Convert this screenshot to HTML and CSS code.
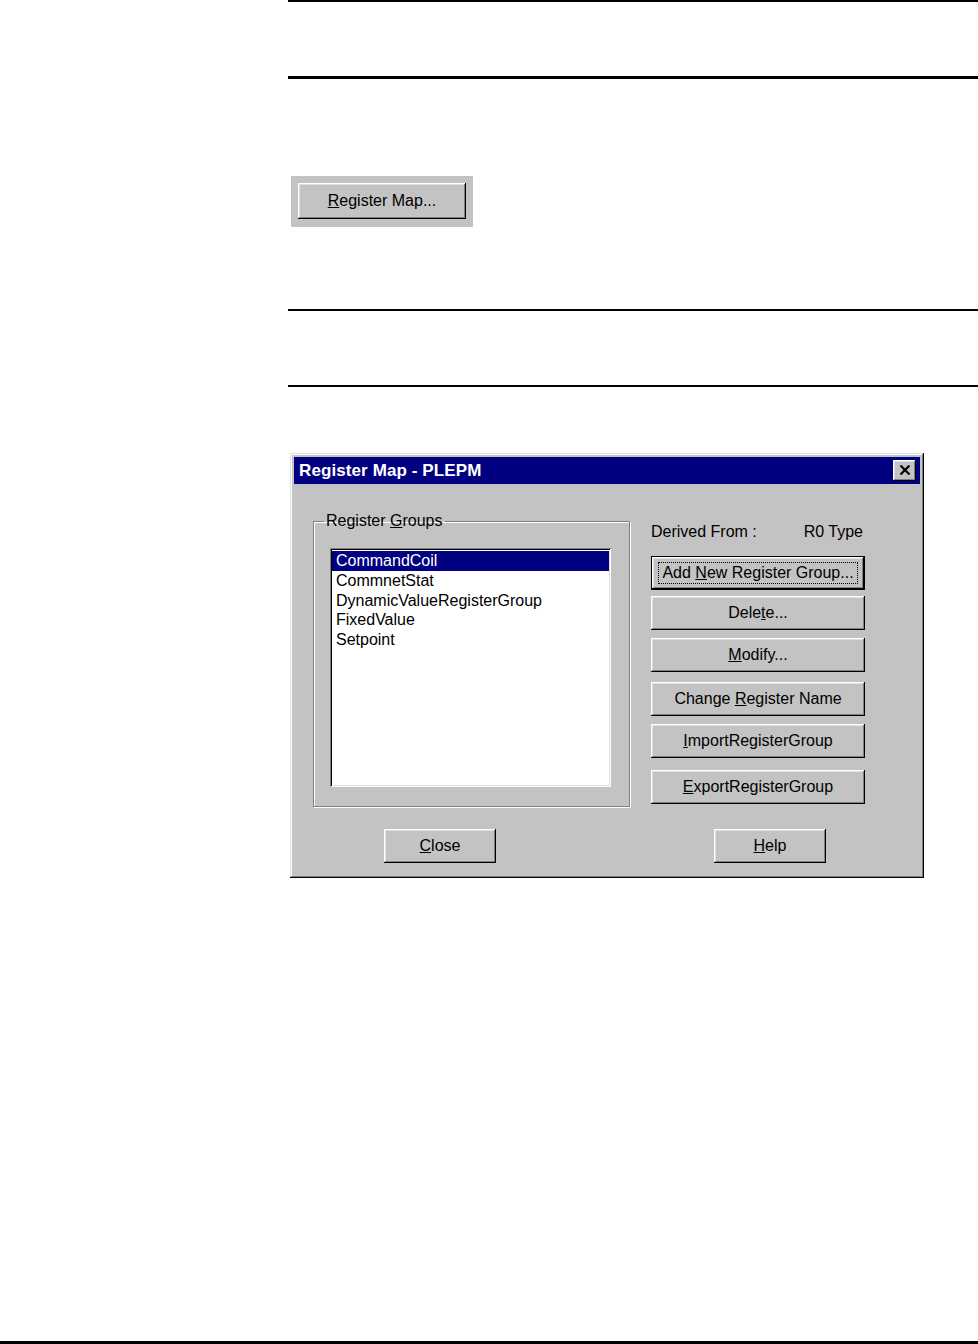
FILE: index.html
```html
<!DOCTYPE html>
<html>
<head>
<meta charset="utf-8">
<link rel="stylesheet" href="styles.css">
</head>
<body>
<div class="page">
  <div class="main">
    <div class="rule rule-top"></div>
    <div class="rule rule-thick"></div>
    <div class="fig-button">
      <div class="btn btn-fig"><span><u>R</u>egister Map...</span></div>
    </div>
    <div class="rule rule-3"></div>
    <div class="rule rule-4"></div>

    <div class="dialog">
      <div class="titlebar">
        <span class="title">Register Map - PLEPM</span>
        <div class="btn xbtn">
          <svg width="12" height="10" viewBox="0 0 12 10"><path d="M1.5 0.5 L10.5 9.5 M10.5 0.5 L1.5 9.5" stroke="#000" stroke-width="2.2" fill="none"/></svg>
        </div>
      </div>
      <div class="dbody">
        <fieldset class="group">
          <legend>Register <u>G</u>roups</legend>
          <div class="listbox">
            <div class="item selected">CommandCoil</div>
            <div class="item">CommnetStat</div>
            <div class="item">DynamicValueRegisterGroup</div>
            <div class="item">FixedValue</div>
            <div class="item">Setpoint</div>
          </div>
        </fieldset>
        <div class="rightcol">
          <div class="derived"><span>Derived From :</span><span>R0 Type</span></div>
          <div class="btn btn-default"><span class="focus">Add <u>N</u>ew Register Group...</span></div>
          <div class="btn btn-side b-delete"><span>Dele<u>t</u>e...</span></div>
          <div class="btn btn-side b-modify"><span><u>M</u>odify...</span></div>
          <div class="btn btn-side b-change"><span>Change <u>R</u>egister Name</span></div>
          <div class="btn btn-side b-import"><span><u>I</u>mportRegisterGroup</span></div>
          <div class="btn btn-side b-export"><span><u>E</u>xportRegisterGroup</span></div>
        </div>
      </div>
      <div class="footer">
        <div class="btn btn-bottom"><span><u>C</u>lose</span></div>
        <div class="btn btn-bottom"><span><u>H</u>elp</span></div>
      </div>
    </div>
  </div>
  <div class="rule-bottom"></div>
</div>
</body>
</html>
```

FILE: styles.css
```css
html, body {
  margin: 0;
  padding: 0;
  background: #fff;
}
body {
  font-family: "Liberation Sans", Arial, sans-serif;
  font-size: 16px;
  color: #000;
}
.page {
  height: 1344px;
  display: flex;
  flex-direction: column;
}
.main {
  margin-left: 288px;
  display: flex;
  flex-direction: column;
}
.rule {
  background: #000;
}
.rule-top {
  height: 2px;
}
.rule-thick {
  height: 3px;
  margin-top: 74px;
}
.fig-button {
  margin-top: 97px;
  margin-left: 3px;
  width: 182px;
  height: 51px;
  box-sizing: border-box;
  padding: 7px;
  background: #c3c3c3;
}
.btn {
  background: #c3c3c3;
  box-shadow: inset -1px -1px #000, inset 1px 1px #fff, inset -2px -2px #808080, inset 2px 2px #dfdfdf;
  display: flex;
  align-items: center;
  justify-content: center;
  box-sizing: border-box;
  white-space: nowrap;
}
.btn-fig {
  width: 168px;
  height: 36px;
  padding-bottom: 1px;
}
.rule-3 {
  height: 2px;
  margin-top: 82px;
}
.rule-4 {
  height: 2px;
  margin-top: 74px;
}
.dialog {
  margin-top: 66px;
  margin-left: 2px;
  width: 634px;
  height: 425px;
  box-sizing: border-box;
  padding: 4px;
  background: #c3c3c3;
  box-shadow: inset -1px -1px #000, inset 1px 1px #dfdfdf, inset -2px -2px #808080, inset 2px 2px #fff;
  display: flex;
  flex-direction: column;
}
.titlebar {
  height: 27px;
  background: #000080;
  display: flex;
  align-items: center;
  justify-content: space-between;
  padding: 0 4px 0 5px;
}
.title {
  color: #fff;
  font-weight: bold;
  font-size: 17px;
  letter-spacing: 0.1px;
  padding-top: 1px;
}
.xbtn {
  width: 23px;
  height: 21px;
  padding-bottom: 1px;
}
.dbody {
  display: flex;
  align-items: flex-start;
  padding-left: 19px;
}
.group {
  margin: 27px 0 0 0;
  width: 317px;
  height: 296px;
  box-sizing: border-box;
  border: 1px solid #808080;
  box-shadow: inset 1px 1px #fff, 1px 1px #fff;
  padding: 17px 16px 0 16px;
}
.group legend {
  margin-left: -6px;
  padding: 0 2px;
  line-height: 20px;
}
.listbox {
  width: 281px;
  height: 239px;
  box-sizing: border-box;
  background: #fff;
  box-shadow: inset 1px 1px #808080, inset -1px -1px #fff, inset 2px 2px #000, inset -2px -2px #dfdfdf;
  padding: 3px 2px 2px 2px;
}
.item {
  height: 19.75px;
  line-height: 19.75px;
  padding-left: 4px;
}
.item.selected {
  background: #000080;
  color: #fff;
}
.rightcol {
  margin-left: 21px;
  margin-top: 38px;
  width: 214px;
  display: flex;
  flex-direction: column;
}
.derived {
  display: flex;
  justify-content: space-between;
  line-height: 20px;
  padding-right: 2px;
  margin-bottom: 14px;
}
.btn-default,
.btn-side {
  height: 34px;
}
.btn-default {
  box-shadow: inset 0 0 0 1px #000, inset -2px -2px #000, inset 2px 2px #fff, inset -3px -3px #808080, inset 3px 3px #dfdfdf;
}
.focus {
  outline: 1px dotted #000;
  outline-offset: 1px;
  padding: 0 2px;
}
.b-delete { margin-top: 6px; }
.b-modify { margin-top: 8px; }
.b-change { margin-top: 10px; }
.b-import { margin-top: 8px; }
.b-export { margin-top: 12px; }
.footer {
  display: flex;
  padding-left: 90px;
  gap: 218px;
  margin-top: 22px;
}
.btn-bottom {
  width: 112px;
  height: 34px;
}
.rule-bottom {
  margin-top: auto;
  height: 3px;
  background: #000;
}
```
